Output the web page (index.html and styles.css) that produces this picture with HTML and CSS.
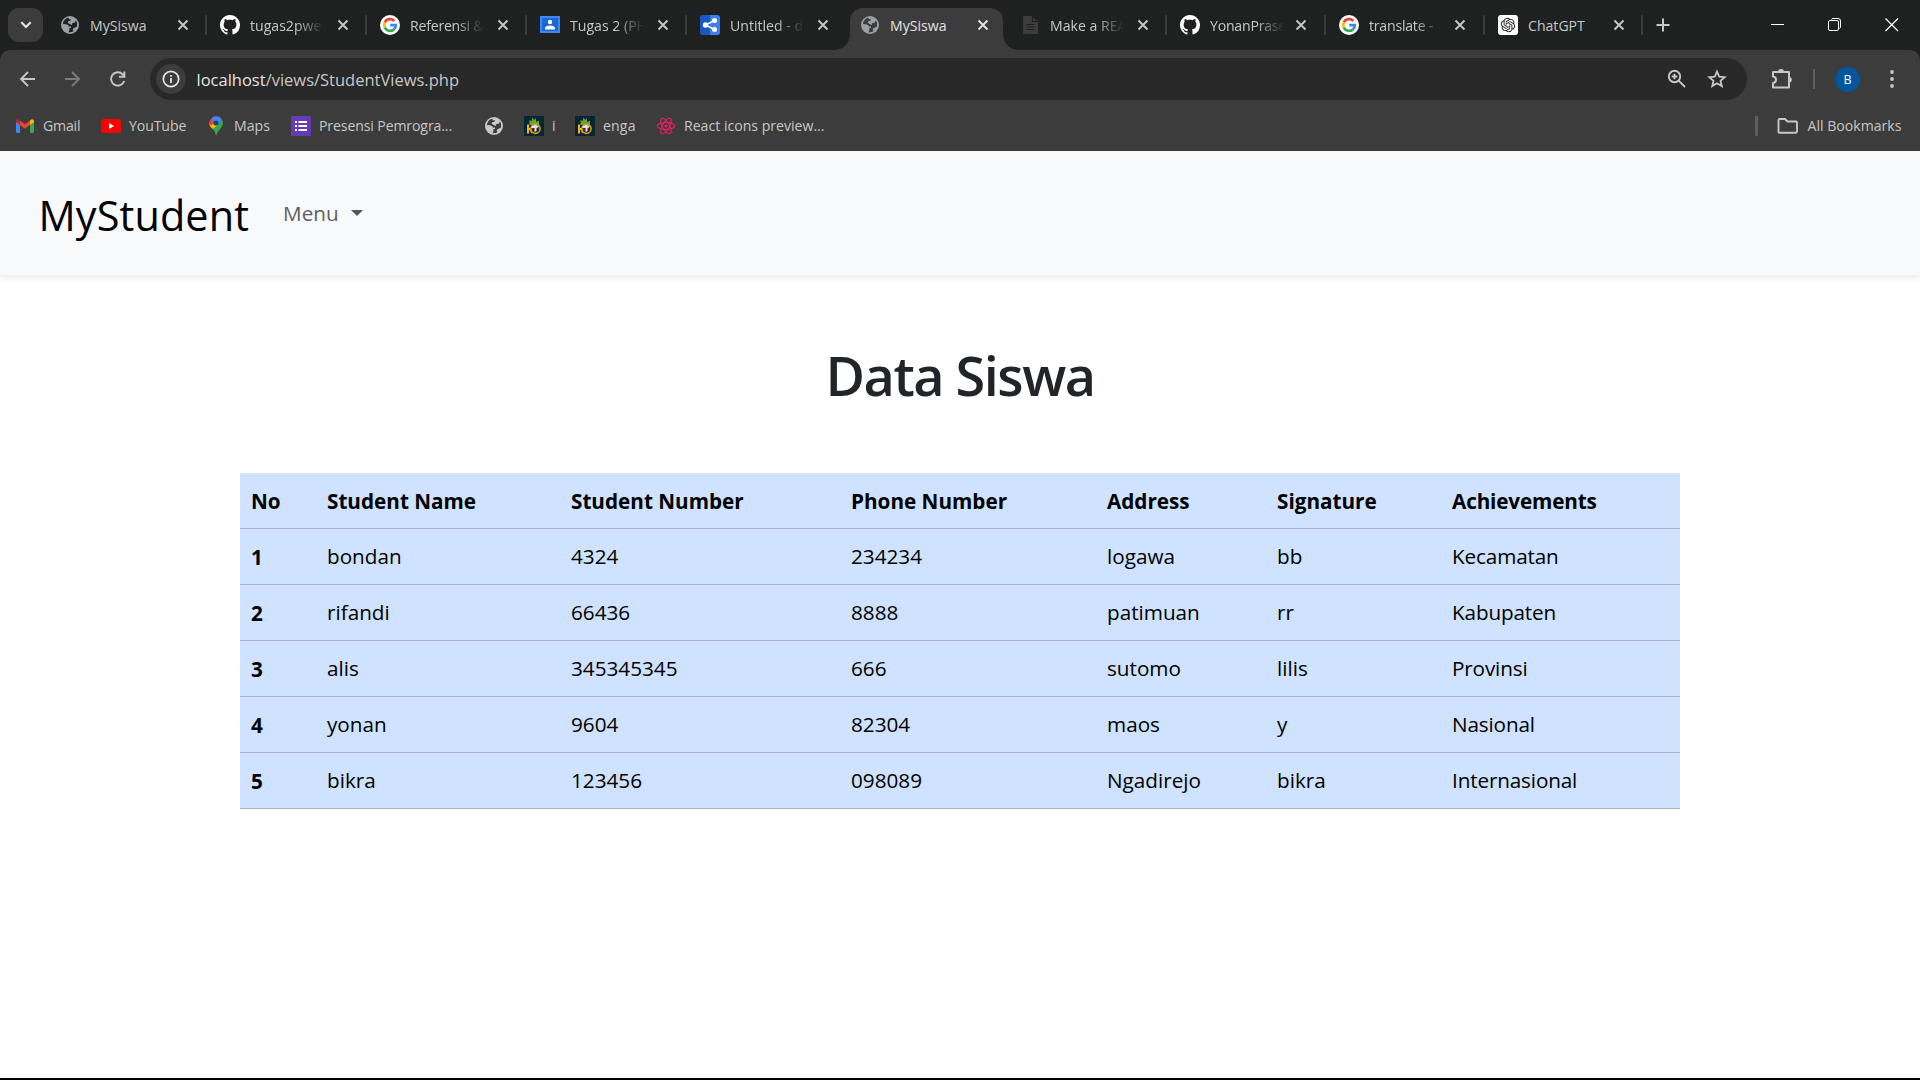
FILE: index.html
```html
<!DOCTYPE html>
<html lang="id">
<head>
<meta charset="utf-8">
<title>MySiswa</title>
<link rel="stylesheet" href="styles.css">
</head>
<body>
<svg class="defs" aria-hidden="true">
  <symbol id="globe" viewBox="0 0 18 18"><circle cx="9" cy="9" r="9" fill="currentColor"/><path class="cut" d="M7.2 1.8Q2.6 3 1.8 8.2Q3.4 7.8 5.8 8.4Q8 9 7.8 10.6H10V12H8.4V14L7.6 16.2Q10.2 16.6 12.6 15.2Q11 13.8 12.2 12.4Q14 11.6 16 10.4Q16.8 7.2 15 4.6L13.6 6.8L11.4 7L10.8 9L8.6 8L6.6 6.8L7.4 5H9.2L10 3L8.2 3.4Z"/></symbol>
  <symbol id="cross" viewBox="0 0 12 12"><path d="M1.5 1.5L10.5 10.5M10.5 1.5L1.5 10.5" fill="none" stroke="currentColor" stroke-width="1.9"/></symbol>
  <symbol id="github" viewBox="0 0 16 16"><path fill="#fff" d="M8 0C3.58 0 0 3.58 0 8c0 3.54 2.29 6.53 5.47 7.59.4.07.55-.17.55-.38 0-.19-.01-.82-.01-1.49-2.01.37-2.53-.49-2.69-.94-.09-.23-.48-.94-.82-1.13-.28-.15-.68-.52-.01-.53.63-.01 1.08.58 1.23.82.72 1.21 1.87.87 2.33.66.07-.52.28-.87.51-1.07-1.78-.2-3.64-.89-3.64-3.95 0-.87.31-1.59.82-2.15-.08-.2-.36-1.02.08-2.12 0 0 .67-.21 2.2.82.64-.18 1.32-.27 2-.27s1.36.09 2 .27c1.53-1.04 2.2-.82 2.2-.82.44 1.1.16 1.92.08 2.12.51.56.82 1.27.82 2.15 0 3.07-1.87 3.75-3.65 3.95.29.25.54.73.54 1.48 0 1.07-.01 1.93-.01 2.2 0 .21.15.46.55.38A8.01 8.01 0 0 0 16 8c0-4.42-3.58-8-8-8"/></symbol>
  <symbol id="google" viewBox="0 0 20 20"><circle cx="10" cy="10" r="10" fill="#fff"/><g fill="none" stroke-width="2.7"><path stroke="#ea4335" d="M14.3 6A5.8 5.8 0 0 0 4.8 7.4"/><path stroke="#fbbc05" d="M4.8 7.4A5.8 5.8 0 0 0 4.8 12.6"/><path stroke="#34a853" d="M4.8 12.6A5.8 5.8 0 0 0 13.9 14.4"/><path stroke="#4285f4" d="M13.9 14.4A5.8 5.8 0 0 0 15.8 10.2H10.2"/></g></symbol>
  <symbol id="castle" viewBox="0 0 20 20"><path fill="#082535" d="M0 0H20V20H0Z"/><path fill="#71a12d" d="M5.5 9V4L8 5V1.5L10.5 4L12 2V6L15 4.5V9Z"/><path stroke="#f2b31b" stroke-width="2" fill="none" d="M4 8.5V17.5M4 13H6.5M6 12L8 17"/><circle cx="11.5" cy="12.8" r="4.6" fill="#302c1e" stroke="#d9a01c" stroke-width="1.5"/><path fill="#dfe5e8" d="M7 12Q8 8.5 13 9.2L15 11L12.5 12V15L10.5 16V12Z"/></symbol>
</svg>

<header class="browser">
  <div class="tabstrip">
    <button class="tab-search"><svg width="12" height="8" viewBox="0 0 12 8"><path d="M1.3 1.3L6 6L10.7 1.3" fill="none" stroke="#e3e3e3" stroke-width="2.2"/></svg></button>
    <div class="tabs">
      <div class="tab"><svg class="fav globe-icon"><use href="#globe"/></svg><span class="tab-label">MySiswa</span><svg class="close"><use href="#cross"/></svg></div>
      <div class="tab"><svg class="fav"><use href="#github"/></svg><span class="tab-label fade">tugas2pwe</span><svg class="close"><use href="#cross"/></svg></div>
      <div class="tab"><svg class="fav"><use href="#google"/></svg><span class="tab-label fade tight">Referensi &amp;</span><svg class="close"><use href="#cross"/></svg></div>
      <div class="tab"><svg class="fav" viewBox="0 0 20 20"><path fill="#4285f4" d="M0 1H20V18H0Z"/><path fill="#1967d2" d="M2 3H18V16H2Z"/><circle cx="10" cy="7" r="2.2" fill="#fff"/><path fill="#fff" d="M5 14.5V13Q5.5 10.5 10 10.5T15 13V14.5Z"/></svg><span class="tab-label fade">Tugas 2 (PH</span><svg class="close"><use href="#cross"/></svg></div>
      <div class="tab before-active"><svg class="fav" viewBox="0 0 20 20"><rect width="20" height="20" rx="3" fill="#1a56c4"/><path fill="#3b7ff0" d="M10 0H17Q20 0 20 3V17Q20 20 17 20H10Z"/><path d="M14.5 5.5L5.5 10L14.5 14.5" fill="none" stroke="#fff" stroke-width="1.6"/><g fill="#fff"><circle cx="5.5" cy="10" r="2.7"/><circle cx="14.5" cy="5.5" r="2.5"/><circle cx="14.5" cy="14.5" r="2.5"/></g></svg><span class="tab-label fade">Untitled - d</span><svg class="close"><use href="#cross"/></svg></div>
      <div class="tab active"><svg class="fav globe-icon"><use href="#globe"/></svg><span class="tab-label">MySiswa</span><svg class="close"><use href="#cross"/></svg></div>
      <div class="tab"><svg class="fav" viewBox="0 0 20 20"><path fill="#3c3c3c" d="M3 1H12L18 7V19H3Z"/><path d="M12.5 1V6.5H18M6 9.5H14M6 12H14M6 14.5H14" fill="none" stroke="#1f2120" stroke-width="1.2"/></svg><span class="tab-label fade">Make a REA</span><svg class="close"><use href="#cross"/></svg></div>
      <div class="tab t159"><svg class="fav"><use href="#github"/></svg><span class="tab-label fade tight">YonanPrase</span><svg class="close"><use href="#cross"/></svg></div>
      <div class="tab t159"><svg class="fav"><use href="#google"/></svg><span class="tab-label fade tight">translate -</span><svg class="close"><use href="#cross"/></svg></div>
      <div class="tab t158"><svg class="fav" viewBox="0 0 20 20"><rect width="20" height="20" rx="3" fill="#fff"/><path transform="translate(2.8 2.8) scale(.6)" fill="#222" d="M22.2819 9.8211a5.9847 5.9847 0 0 0-.5157-4.9108 6.0462 6.0462 0 0 0-6.5098-2.9A6.0651 6.0651 0 0 0 4.9807 4.1818a5.9847 5.9847 0 0 0-3.9977 2.9 6.0462 6.0462 0 0 0 .7427 7.0966 5.98 5.98 0 0 0 .511 4.9107 6.051 6.051 0 0 0 6.5146 2.9001A5.9847 5.9847 0 0 0 13.2599 24a6.0557 6.0557 0 0 0 5.7718-4.2058 5.9894 5.9894 0 0 0 3.9977-2.9001 6.0557 6.0557 0 0 0-.7475-7.0729zm-9.022 12.6081a4.4755 4.4755 0 0 1-2.8764-1.0408l.1419-.0804 4.7783-2.7582a.7948.7948 0 0 0 .3927-.6813v-6.7369l2.02 1.1686a.071.071 0 0 1 .038.052v5.5826a4.504 4.504 0 0 1-4.4945 4.4944zm-9.6607-4.1254a4.4708 4.4708 0 0 1-.5346-3.0137l.142.0852 4.783 2.7582a.7712.7712 0 0 0 .7806 0l5.8428-3.3685v2.3324a.0804.0804 0 0 1-.0332.0615L9.74 19.9502a4.4992 4.4992 0 0 1-6.1408-1.6464zM2.3408 7.8956a4.485 4.485 0 0 1 2.3655-1.9728V11.6a.7664.7664 0 0 0 .3879.6765l5.8144 3.3543-2.0201 1.1685a.0757.0757 0 0 1-.071 0l-4.8303-2.7865A4.504 4.504 0 0 1 2.3408 7.872zm16.5963 3.8558L13.1038 8.364 15.1192 7.2a.0757.0757 0 0 1 .071 0l4.8303 2.7913a4.4944 4.4944 0 0 1-.6765 8.1042v-5.6772a.79.79 0 0 0-.407-.667zm2.0107-3.0231l-.142-.0852-4.7735-2.7818a.7759.7759 0 0 0-.7854 0L9.409 9.2297V6.8974a.0662.0662 0 0 1 .0284-.0615l4.8303-2.7866a4.4992 4.4992 0 0 1 6.6802 4.66zM8.3065 12.863l-2.02-1.1638a.0804.0804 0 0 1-.038-.0567V6.0742a4.4992 4.4992 0 0 1 7.3757-3.4537l-.142.0805L8.704 5.459a.7948.7948 0 0 0-.3927.6813zm1.0976-2.3654l2.602-1.4998 2.6069 1.4998v2.9994l-2.5974 1.4997-2.6067-1.4997Z"/></svg><span class="tab-label">ChatGPT</span><svg class="close"><use href="#cross"/></svg></div>
    </div>
    <svg class="newtab" viewBox="0 0 14 14"><path d="M7 0.5V13.5M0.5 7H13.5" stroke="#c7c7c7" stroke-width="2"/></svg>
    <div class="window-controls">
      <svg viewBox="0 0 14 14"><path d="M0 6.5H13" stroke="#fff"/></svg>
      <svg viewBox="0 0 14 14"><path d="M3.5 1.5Q3.7 0.5 5 0.5H10Q12.5 0.5 12.5 3V9Q12.5 10 11.5 10.5" fill="none" stroke="#fff"/><rect x=".5" y="2.5" width="10" height="10" rx="1.5" fill="none" stroke="#fff"/></svg>
      <svg viewBox="0 0 14 14"><path d="M.5 .5L13 13M13 .5L.5 13" stroke="#fff" stroke-width="1.2"/></svg>
    </div>
  </div>

  <div class="chrome">
    <div class="toolbar">
      <svg class="nav-icon" viewBox="0 0 16 16"><path d="M15 8H1M8 1L1 8L8 15" fill="none" stroke="#c7c7c7" stroke-width="1.9"/></svg>
      <svg class="nav-icon" viewBox="0 0 16 16"><path d="M0 8H14M7 1L14 8L7 15" fill="none" stroke="#7b7b7b" stroke-width="1.9"/></svg>
      <svg class="nav-icon" viewBox="0 0 16 16"><path d="M14.2 10A6.7 6.7 0 1 1 12.7 3.3L14.2 5M14.4 .5V5.7H9" fill="none" stroke="#c7c7c7" stroke-width="1.9"/></svg>
      <div class="omnibox">
        <span class="site-info"><svg width="18" height="18" viewBox="0 0 18 18"><circle cx="9" cy="9" r="7.7" fill="none" stroke="#e3e3e3" stroke-width="1.7"/><path d="M9 8V13M9 5V6.8" stroke="#e3e3e3" stroke-width="1.8"/></svg></span>
        <span class="url"><b>localhost</b>/views/StudentViews.php</span>
        <svg class="zoom-icon" width="20" height="20" viewBox="0 0 20 20"><g fill="none" stroke="#c7c7c7" stroke-width="1.9"><circle cx="7.5" cy="7.5" r="5.7"/><path d="M11.7 11.7L18 18M7.5 4.7V10.3M4.7 7.5H10.3"/></g></svg>
        <svg class="star-icon" width="20" height="20" viewBox="0 0 20 20"><path d="M10 2.5L12.2 7.6L17.7 8.1L13.5 11.7L14.8 17.1L10 14.2L5.2 17.1L6.5 11.7L2.3 8.1L7.8 7.6Z" fill="none" stroke="#c7c7c7" stroke-width="1.8"/></svg>
      </div>
      <svg class="ext-icon" width="22" height="22" viewBox="0 0 22 22"><path d="M2 4H18V19.5H2V15Q5 14.5 5 11.7T2 8.5Z" fill="none" stroke="#c7c7c7" stroke-width="2" stroke-linejoin="round"/><path d="M7 4A3 3 0 0 1 13 4ZM18 9A2.8 2.8 0 0 1 18 14.6Z" fill="#c7c7c7"/></svg>
      <span class="tb-sep"></span>
      <span class="avatar">B</span>
      <svg class="dots" width="4" height="20" viewBox="0 0 4 20"><g fill="#c7c7c7"><circle cx="2" cy="3" r="1.9"/><circle cx="2" cy="10" r="1.9"/><circle cx="2" cy="17" r="1.9"/></g></svg>
    </div>

    <nav class="bookmarks">
      <a class="bm bm-gmail"><svg viewBox="0 0 20 20"><path fill="#4285f4" d="M1 5L5 8V17H2.5Q1 17 1 15.5Z"/><path fill="#34a853" d="M15 8L19 5V15.5Q19 17 17.5 17H15Z"/><path fill="#fbbc04" d="M15 4.5Q17 2.5 18.5 3.8Q19 4.3 19 6L15 9Z"/><path fill="#c5221f" d="M1 6Q1 4.3 1.5 3.8Q3 2.5 5 4.5V9L1 6Z"/><path fill="#ea4335" d="M5 4.5L10 8.2L15 4.5V9L10 12.7L5 9Z"/></svg><span>Gmail</span></a>
      <a class="bm bm-youtube"><svg viewBox="0 0 20 20"><rect y="3" width="20" height="14" rx="3.5" fill="#f00"/><path fill="#fff" d="M8 7L13 10L8 13Z"/></svg><span>YouTube</span></a>
      <a class="bm bm-maps"><svg viewBox="0 0 20 20"><path fill="#34a853" d="M10 20Q9.5 15.5 6 12L15.5 3.5Q17 5 17 7.5Q17 10 14 13Q11 16 10 20Z"/><path fill="#fbbc04" d="M6.5 13Q3 10 3.2 7L9 6L12 9Z"/><path fill="#ea4335" d="M3.2 8Q2.8 5 5 2.7L9 5L5.5 9.5Z"/><path fill="#4285f4" d="M5 2.7Q7 .3 10 .3Q14 .3 16 4L11 8.5L7.5 5.5Z"/><circle cx="10" cy="7" r="2.6" fill="#223f79"/></svg><span>Maps</span></a>
      <a class="bm bm-presensi"><svg viewBox="0 0 20 20"><rect width="20" height="20" rx="1" fill="#673ab7"/><path d="M7.5 6H16M7.5 10H16M7.5 14H16M4 6H6M4 10H6M4 14H6" stroke="#fff" stroke-width="2.2"/></svg><span>Presensi Pemrogra...</span></a>
      <a class="bm bm-blank"><svg class="globe-icon"><use href="#globe"/></svg></a>
      <a class="bm bm-i"><svg><use href="#castle"/></svg><span>i</span></a>
      <a class="bm bm-enga"><svg><use href="#castle"/></svg><span>enga</span></a>
      <a class="bm bm-react"><svg viewBox="0 0 20 20"><g fill="none" stroke="#e91e63" stroke-width="1.1"><ellipse cx="10" cy="10" rx="8.7" ry="3.5"/><ellipse cx="10" cy="10" rx="8.7" ry="3.5" transform="rotate(60 10 10)"/><ellipse cx="10" cy="10" rx="8.7" ry="3.5" transform="rotate(120 10 10)"/></g><circle cx="10" cy="10" r="1.5" fill="#e91e63"/></svg><span>React icons preview...</span></a>
      <span class="bm-sep"></span>
      <a class="bm bm-all"><svg viewBox="0 0 22 20"><path d="M1.5 16V4Q1.5 3 2.5 3H8L10.5 5.5H19Q20 5.5 20 6.5V15.5Q20 16.7 19 16.7H2.5Q1.5 16.7 1.5 16Z" fill="none" stroke="#c7c7c7" stroke-width="1.9"/></svg><span>All Bookmarks</span></a>
    </nav>
  </div>
</header>

<main class="page">
  <nav class="navbar">
    <a class="brand">MyStudent</a>
    <a class="menu">Menu<i class="caret"></i></a>
  </nav>
  <h1 class="title">Data Siswa</h1>
  <table class="students">
    <colgroup><col class="c-no"><col class="c-name"><col class="c-number"><col class="c-phone"><col class="c-address"><col class="c-sign"><col class="c-ach"></colgroup>
    <thead><tr><th>No</th><th>Student Name</th><th>Student Number</th><th>Phone Number</th><th>Address</th><th>Signature</th><th>Achievements</th></tr></thead>
    <tbody>
      <tr><th>1</th><td>bondan</td><td>4324</td><td>234234</td><td>logawa</td><td>bb</td><td>Kecamatan</td></tr>
      <tr><th>2</th><td>rifandi</td><td>66436</td><td>8888</td><td>patimuan</td><td>rr</td><td>Kabupaten</td></tr>
      <tr><th>3</th><td>alis</td><td>345345345</td><td>666</td><td>sutomo</td><td>lilis</td><td>Provinsi</td></tr>
      <tr><th>4</th><td>yonan</td><td>9604</td><td>82304</td><td>maos</td><td>y</td><td>Nasional</td></tr>
      <tr><th>5</th><td>bikra</td><td>123456</td><td>098089</td><td>Ngadirejo</td><td>bikra</td><td>Internasional</td></tr>
    </tbody>
  </table>
</main>
<div class="edge"></div>
</body>
</html>
```
FILE: styles.css
```css
* { box-sizing: border-box; }

body {
  margin: 0;
  height: 1080px;
  display: flex;
  flex-direction: column;
  overflow: hidden;
  background: #fff;
  font-family: "Open Sans", "Noto Sans", sans-serif;
  font-size: 20.7px;
  color: #000;
}

.defs { display: none; }

/* tab strip */
.browser { background: #1f2120; color: #c7c7c7; --cut: #1f2120; }
.tabstrip { display: flex; height: 50px; align-items: center; padding-left: 8px; }
.tab-search {
  display: flex; align-items: center; justify-content: center;
  width: 35px; height: 34px; margin: 0 4px 0 0; padding: 0;
  border: 0; border-radius: 11px; background: #3c3c3c;
}
.tabs { display: flex; height: 50px; }
.tab {
  position: relative;
  display: flex; align-items: center;
  width: 160px; height: 50px; padding-left: 13px;
  font-size: 14.1px;
}
.tab::after {
  content: ""; width: 2.5px; height: 20px; margin-left: auto;
  border-radius: 1px; background: #3c3c3c;
}
.fav { width: 20px; height: 20px; flex: none; }
.globe-icon { padding: 1px; color: #9aa0a6; }
.cut { fill: var(--cut); }
.tab-label {
  width: 86.5px; margin-left: 10px;
  white-space: nowrap; line-height: 20px; padding-top: 1px;
}
.tight { letter-spacing: -.22px; }
.fade { -webkit-mask-image: linear-gradient(90deg, #000 46px, transparent 74px); mask-image: linear-gradient(90deg, #000 46px, transparent 74px); }
.close { width: 12px; height: 12px; flex: none; }
.t159 { width: 159px; }
.t158 { width: 158px; }
.t159 .tab-label, .t158 .tab-label { width: 84.5px; }

/* selected tab with flared bottom corners */
.tab.active { color: #e3e3e3; isolation: isolate; --cut: #3c3c3c; }
.tab.active::before {
  content: ""; position: absolute; z-index: -1;
  left: 3px; right: 4.5px; top: 7.5px; bottom: 0;
  border-radius: 13px 13px 0 0; background: #3c3c3c;
}
.tab.before-active::after, .tab.active::after {
  position: absolute; bottom: 0; width: 15px; height: 15px; margin: 0; border-radius: 0;
}
.tab.before-active::after {
  right: -3px;
  background: radial-gradient(circle at 0 0, transparent 14.5px, #3c3c3c 15px);
}
.tab.active::after {
  right: -10.5px;
  background: radial-gradient(circle at 100% 0, transparent 14.5px, #3c3c3c 15px);
}
.newtab { width: 14px; height: 14px; margin-left: 12.5px; }
.window-controls { display: flex; gap: 43px; margin: 0 21.5px 0 auto; }
.window-controls svg { width: 14px; height: 14px; }

/* toolbar */
.chrome { height: 101px; background: #3c3c3c; border-radius: 10px 10px 0 0; --cut: #3c3c3c; }
.toolbar { display: flex; align-items: center; height: 58px; padding-left: 20px; }
.nav-icon { width: 16px; height: 16px; margin-right: 29px; }
.omnibox {
  display: flex; align-items: center;
  width: 1597px; height: 42px; margin-left: -5px; padding-left: 6px;
  border-radius: 21px; background: #282828;
}
.site-info {
  display: flex; align-items: center; justify-content: center;
  width: 30px; height: 30px; border-radius: 50%; background: #3c3c3c;
}
.url { margin-left: 10.5px; font-size: 16.5px; color: #c7c7c7; }
.url b { font-weight: 400; color: #e3e3e3; }
.zoom-icon { margin-left: auto; }
.star-icon { margin: 0 20px 0 20px; }
.ext-icon { margin-left: 23.5px; }
.tb-sep { width: 2px; height: 20px; margin-left: 20px; background: #5e5e5e; }
.avatar {
  width: 25px; height: 25px; margin-left: 20.5px; border-radius: 50%;
  background: #00569f; color: #fff; font-size: 12.5px; line-height: 25px; text-align: center;
}
.dots { margin-left: 30px; }

/* bookmarks */
.bookmarks { display: flex; align-items: center; height: 36px; padding-left: 15px; font-size: 14.1px; }
.bm { display: flex; align-items: center; gap: 8px; white-space: nowrap; }
.bm span { padding-bottom: 2px; }
.bm svg { width: 20px; height: 20px; flex: none; }
.bm-gmail { width: 86px; letter-spacing: -.2px; }
.bm-youtube { width: 105px; letter-spacing: -.1px; }
.bm-maps { width: 85px; }
.bm-presensi { width: 193px; letter-spacing: -.12px; }
.bm-blank { width: 40px; }
.bm-blank .globe-icon { color: #c7c9cf; }
.bm-i { width: 51px; }
.bm-enga { width: 81px; letter-spacing: .15px; }
.bm-react { width: 1099px; }
.bm-sep { width: 3px; height: 20px; margin-right: 18.5px; border-radius: 1px; background: #5e5e5e; }
.bm-all { gap: 9px; }
.bm-all svg { width: 22px; }

/* page */
.page { flex: 1; }
.navbar {
  display: flex; align-items: center; height: 124px; padding-left: 38.5px;
  background: #f8f9fb; box-shadow: 0 3px 5.5px rgba(0, 0, 0, .075);
}
.brand { padding-top: 3px; font-size: 41.4px; letter-spacing: .12px; }
.menu { display: flex; align-items: center; gap: 12.5px; margin-left: 34px; color: #5f6061; }
.caret { border: 6.5px solid transparent; border-top-color: #555; border-bottom: 0; }
.title {
  margin: 66px 0 0; height: 132px;
  font-size: 54px; font-weight: 600; line-height: 69px; letter-spacing: -1.5px;
  text-align: center; color: #212529;
}
.students {
  width: 1440px; margin: 0 auto;
  border-collapse: separate; border-spacing: 0; table-layout: fixed;
  background: #cfe2ff;
}
.students th, .students td {
  height: 56px; padding: 0 0 0 11px; text-align: left;
  border-bottom: 1px solid #a6b5cc;
}
.students td { padding-bottom: 1px; }
.students th:last-child, .students td:last-child { letter-spacing: -.14px; }
.c-no { width: 76px; }
.c-name { width: 244px; }
.c-number { width: 280px; }
.c-phone { width: 256px; }
.c-address { width: 170px; }
.c-sign { width: 175px; }
.edge { height: 2px; background: #000; }
```
